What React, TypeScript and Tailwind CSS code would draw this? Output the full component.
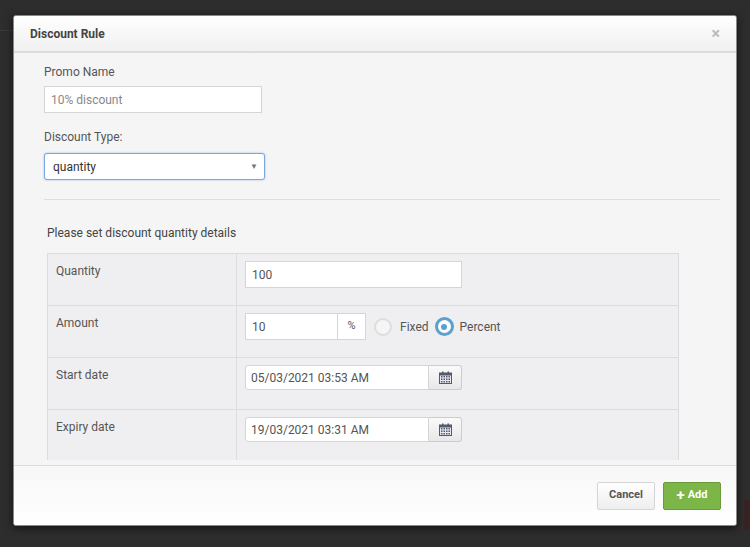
import React from "react";

const Cal = () => (
  <svg width="13" height="13" viewBox="0 0 13 13">
    <rect x="0.5" y="2" width="12" height="10.5" fill="#e8e8ee" stroke="#555a6e" />
    <rect x="0.5" y="2" width="12" height="2.5" fill="#555a6e" />
    <rect x="3" y="0.5" width="1.5" height="3" fill="#555a6e" />
    <rect x="8.5" y="0.5" width="1.5" height="3" fill="#555a6e" />
    {[5.5, 8, 10.5].map((y) => [2, 4.5, 7, 9.5].map((x) => <rect key={x + "-" + y} x={x} y={y - 0.5} width="1.5" height="1.5" fill="#555a6e" />))}
  </svg>
);

function Row({ label, children, last }: { label: string; children: React.ReactNode; last?: boolean }) {
  return (
    <div className={`flex ${last ? "h-[50px]" : "h-[52px] border-b border-[#dcdcdf]"}`}>
      <div className="w-[189px] border-r border-[#dcdcdf] pl-2 pt-[8px] text-[12px] text-[#555]">{label}</div>
      <div className="flex-1 pl-2 pt-[7px]">{children}</div>
    </div>
  );
}

export default function App() {
  return (
    <div className="relative h-[547px] w-[750px] overflow-hidden bg-[#2d2d2d]" style={{ fontFamily: "Roboto, 'Liberation Sans', sans-serif" }}>
      <div className="absolute left-0 top-[30px] h-px w-[13px] bg-[#3a3a3a]" />
      <div className="absolute right-0 top-[500px] h-[30px] w-[6px] bg-[#3a2222]" />
      <div className="absolute left-[13px] top-[15px] flex h-[511px] w-[724px] flex-col overflow-hidden rounded-[3px] border border-[#888] bg-[#f5f5f5] shadow-[0_2px_8px_rgba(0,0,0,0.6)]">
        <div className="flex h-[37px] items-center justify-between border-b-2 border-[#dcdcdc] bg-gradient-to-b from-white to-[#f0f0f0] px-[16px]">
          <span className="text-[12px] font-bold text-[#444]">Discount Rule</span>
          <span className="text-[16px] font-bold leading-none text-[#bbb]">×</span>
        </div>
        <div className="h-[412px] overflow-hidden px-[30px] pt-[10px]">
          <div className="text-[12px] text-[#555]">Promo Name</div>
          <div className="mt-[5px] flex h-[27px] w-[218px] items-center border border-[#d5d5d5] bg-white px-[6px] text-[12px] text-[#888]">10% discount</div>
          <div className="mt-[15px] text-[12px] text-[#555]">Discount Type:</div>
          <div className="mt-[7px] flex h-[27px] w-[221px] items-center justify-between rounded-[3px] border border-[#7aa7e0] bg-white pl-[8px] pr-[6px] text-[12px] text-[#333] shadow-[0_0_2px_rgba(80,140,220,0.6)]">
            quantity
            <span className="text-[8px] text-[#777]">▼</span>
          </div>
          <div className="-mr-[14px] mt-[19px] h-px bg-[#dedede]" />
          <div className="ml-[3px] mt-[24px] text-[12px] text-[#444]">Please set discount quantity details</div>
          <div className="ml-[3px] mt-[11px] w-[632px] border border-b-0 border-[#dcdcdf] bg-[#efeff1]">
            <Row label="Quantity">
              <div className="flex h-[27px] w-[217px] items-center border border-[#d5d5d5] bg-white px-[6px] text-[12px] text-[#555]">100</div>
            </Row>
            <Row label="Amount">
              <div className="flex items-center">
                <div className="flex h-[27px] w-[93px] items-center border border-[#d5d5d5] bg-white px-[6px] text-[12px] text-[#555]">10</div>
                <div className="flex h-[27px] w-[28px] items-center justify-center border border-l-0 border-[#d5d5d5] bg-white text-[11px] text-[#555]">%</div>
                <div className="ml-[8px] h-[18px] w-[18px] rounded-full border-2 border-[#ddd] bg-[#f5f5f5]" />
                <span className="ml-[8px] text-[12px] text-[#555]">Fixed</span>
                <div className="ml-[6px] flex h-[19px] w-[19px] items-center justify-center rounded-full border-[3px] border-[#5aa0d0] bg-white">
                  <div className="h-[6px] w-[6px] rounded-full bg-[#5aa0d0]" />
                </div>
                <span className="ml-[6px] text-[12px] text-[#555]">Percent</span>
              </div>
            </Row>
            <Row label="Start date">
              <div className="flex h-[25px]">
                <div className="flex w-[184px] items-center rounded-l-[3px] border border-[#d5d5d5] bg-white px-[5px] text-[12px] text-[#555]">05/03/2021 03:53 AM</div>
                <div className="flex w-[33px] items-center justify-center rounded-r-[3px] border border-l-0 border-[#ccc] bg-gradient-to-b from-[#fafafa] to-[#e8e8e8]"><Cal /></div>
              </div>
            </Row>
            <Row label="Expiry date" last>
              <div className="flex h-[25px]">
                <div className="flex w-[184px] items-center rounded-l-[3px] border border-[#d5d5d5] bg-white px-[5px] text-[12px] text-[#555]">19/03/2021 03:31 AM</div>
                <div className="flex w-[33px] items-center justify-center rounded-r-[3px] border border-l-0 border-[#ccc] bg-gradient-to-b from-[#fafafa] to-[#e8e8e8]"><Cal /></div>
              </div>
            </Row>
          </div>
        </div>
        <div className="flex flex-1 items-center justify-end gap-[8px] border-t border-[#dcdcdc] bg-gradient-to-b from-[#f7f7f7] to-white pr-[15px]">
          <div className="flex h-[28px] w-[58px] items-center justify-center rounded-[2px] border border-[#d5d5d5] bg-gradient-to-b from-white to-[#eee] text-[11px] font-bold text-[#555]">Cancel</div>
          <div className="flex h-[28px] w-[58px] items-center justify-center gap-[3px] rounded-[2px] border border-[#6a9a3a] bg-[#7cb548] text-[11px] font-bold text-white">
            <span className="text-[15px] leading-none">+</span>Add
          </div>
        </div>
      </div>
    </div>
  );
}
